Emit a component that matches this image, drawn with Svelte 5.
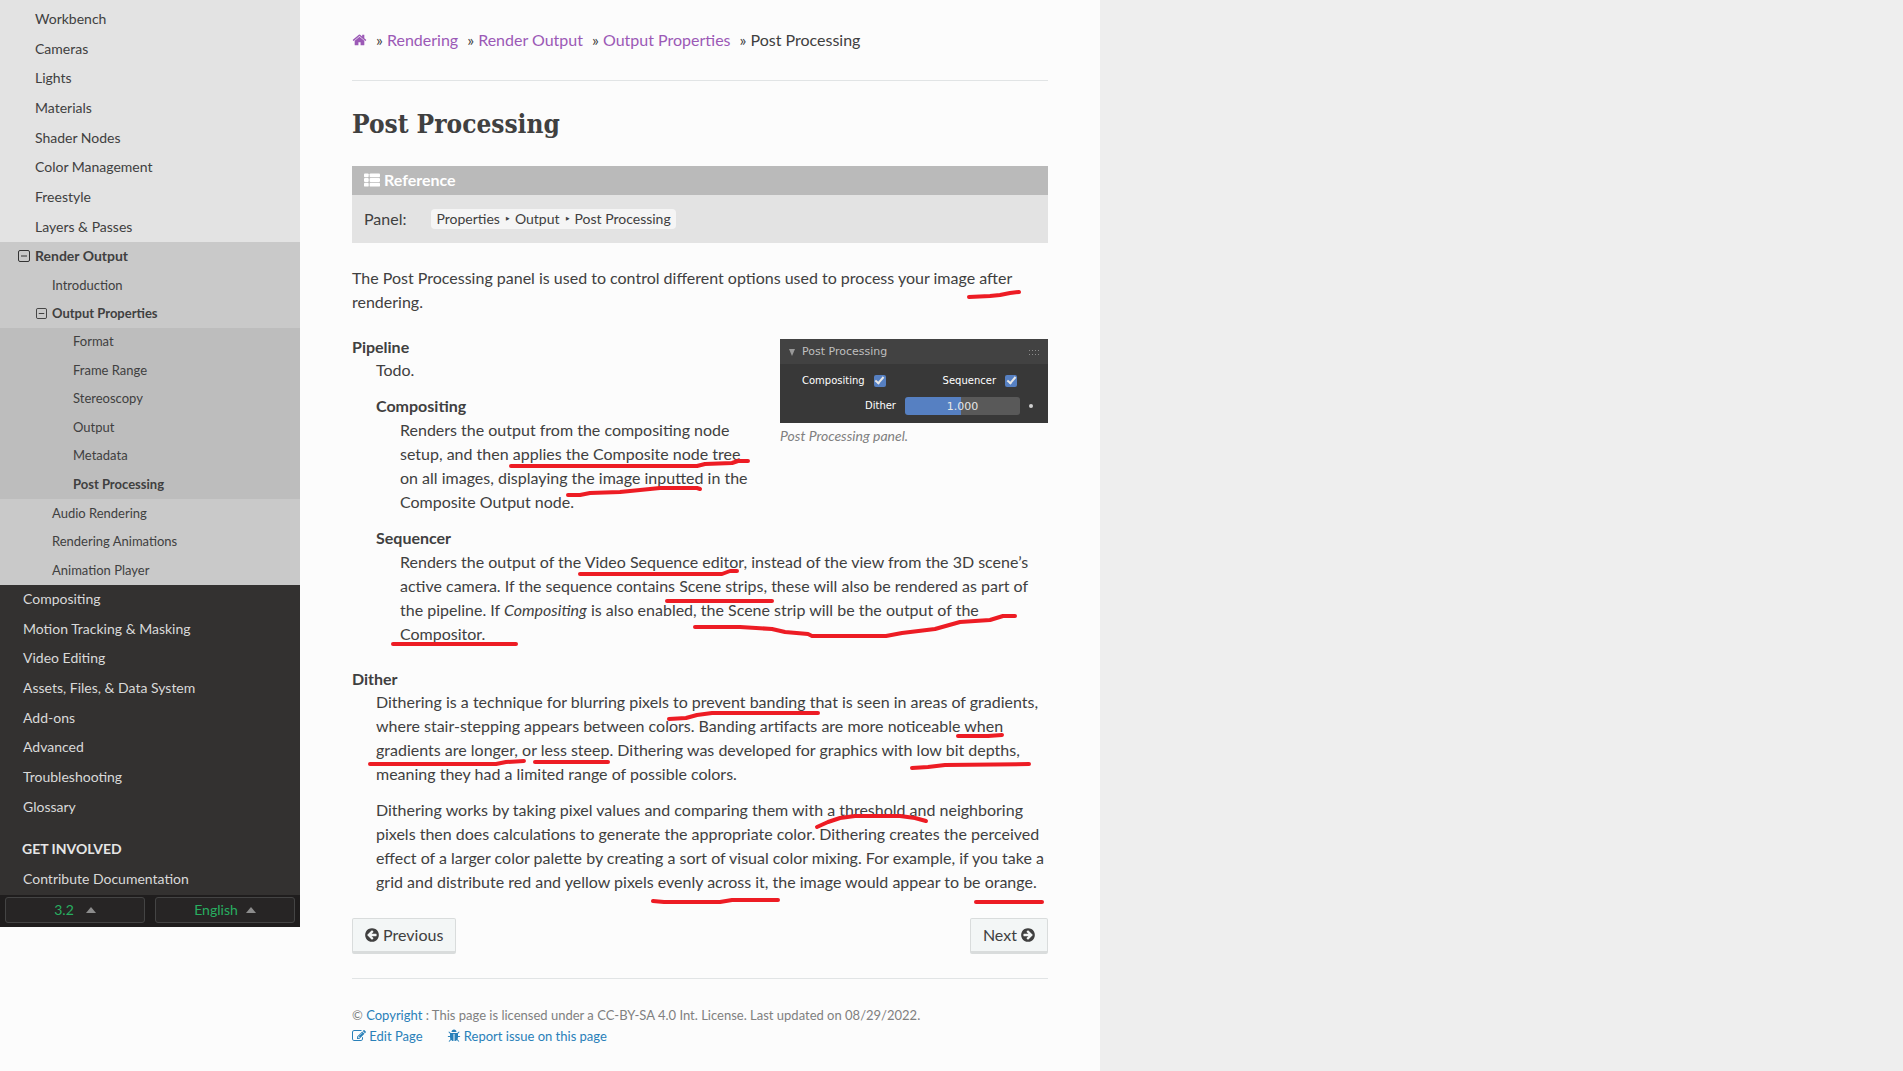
<script>
  const chapters = ['Workbench', 'Cameras', 'Lights', 'Materials', 'Shader Nodes', 'Color Management', 'Freestyle', 'Layers & Passes'];
  const outputPages = ['Format', 'Frame Range', 'Stereoscopy', 'Output', 'Metadata', 'Post Processing'];
  const outputSiblings = ['Audio Rendering', 'Rendering Animations', 'Animation Player'];
  const sections = ['Compositing', 'Motion Tracking & Masking', 'Video Editing', 'Assets, Files, & Data System', 'Add-ons', 'Advanced', 'Troubleshooting', 'Glossary'];
  const crumbs = ['Rendering', 'Render Output', 'Output Properties'];

  // Pen marks drawn over the article
  const marks = [
    '969,297 990,296 1000,295 1010,293 1019,292',
    '511,466 697,466 705,464 732,463 738,461 748,461',
    '568,495 580,495 590,493 620,492 640,490 660,488 697,488 700,489',
    '580,574 722,574 730,571 737,571',
    '667,601 772,601',
    '695,627 740,627 772,629 785,632 808,634 812,636 886,636 902,633 935,629 960,622 990,620 1003,616 1015,616',
    '393,644 516,644',
    '669,719 686,718 697,715 712,713 818,713',
    '958,736 988,736 1002,735',
    '370,764 496,764 506,762 524,761',
    '535,762 608,762',
    '912,768 928,767 945,765 1029,764',
    '817,827 828,822 840,818 855,816 900,816 915,818 926,821',
    '653,901 664,902 720,902 732,900 778,900',
    '976,902 1042,902'
  ];

  const icons = {
    home: 'M1472 992v480q0 26-19 45t-45 19h-384v-384h-256v384h-384q-26 0-45-19t-19-45v-480q0-1 .5-3t.5-3l575-474 575 474q1 2 1 6zm223-69l-62 74q-8 9-21 11h-3q-13 0-21-7l-692-577-692 577q-12 8-24 7-13-2-21-11l-62-74q-8-10-7-23.5t11-21.5l719-599q32-26 76-26t76 26l244 204v-195q0-14 9-23t23-9h192q14 0 23 9t9 23v408l219 182q10 8 11 21.5t-7 23.5z',
    arrow: 'M1408 960v-128q0-26-19-45t-45-19h-502l189-189q19-19 19-45t-19-45l-91-91q-18-18-45-18t-45 18l-362 362-91 91q-18 18-18 45t18 45l91 91 362 362q18 18 45 18t45-18l91-91q18-18 18-45t-18-45l-189-189h502q26 0 45-19t19-45zm256-64q0 209-103 385.5t-279.5 279.5-385.5 103-385.5-103-279.5-279.5-103-385.5 103-385.5 279.5-279.5 385.5-103 385.5 103 279.5 279.5 103 385.5z',
    edit: 'M888 1184l116-116-152-152-116 116v56h96v96h56zm440-720q-16-16-33 1l-350 350q-17 17-1 33t33-1l350-350q17-17 1-33zm80 594v190q0 119-84.5 203.5t-203.5 84.5h-832q-119 0-203.5-84.5t-84.5-203.5v-832q0-119 84.5-203.5t203.5-84.5h832q63 0 117 25 15 7 18 23 3 17-9 29l-49 49q-14 14-32 8-23-6-45-6h-832q-66 0-113 47t-47 113v832q0 66 47 113t113 47h832q66 0 113-47t47-113v-126q0-13 9-22l64-64q15-15 35-7t20 29zm-96-738l288 288-672 672h-288v-288zm444 132l-92 92-288-288 92-92q28-28 68-28t68 28l152 152q28 28 28 68t-28 68z',
    bug: 'M1696 960q0 26-19 45t-45 19h-224q0 171-67 290l208 209q19 19 19 45t-19 45q-18 19-45 19t-45-19l-198-197q-5 5-15 13t-42 28.5-65 36.5-82 29-97 13v-896h-128v896q-51 0-101.5-13.5t-87-33-66-39-43.5-32.5l-15-14-183 207q-20 21-48 21-24 0-43-16-19-18-20.5-44.5t15.5-46.5l202-227q-58-114-58-274h-224q-26 0-45-19t-19-45 19-45 45-19h224v-294l-173-173q-19-19-19-45t19-45 45-19 45 19l173 173h844l173-173q19-19 45-19t45 19 19 45-19 45l-173 173v294h224q26 0 45 19t19 45zm-480-576h-640q0-133 93.5-226.5t226.5-93.5 226.5 93.5 93.5 226.5z'
  };
</script>

{#snippet icon(path, flip)}
  <svg class="icon" class:flip viewBox="0 0 1792 1792" aria-hidden="true"><path d={path} fill="currentColor" /></svg>
{/snippet}

{#snippet collapse(label)}
  <button class="collapse" aria-label={label}>
    <svg viewBox="0 0 12 12" aria-hidden="true">
      <rect x="0.5" y="0.5" width="11" height="11" rx="1.5" fill="none" stroke="currentColor" />
      <path d="M3 6H9" stroke="currentColor" />
    </svg>
  </button>
{/snippet}

<div class="page">
  <nav class="side" aria-label="Manual contents">
    <ul class="rows level2">
      {#each chapters as name}<li><a href="#top">{name}</a></li>{/each}
    </ul>
    <div class="branch">
      <div class="row head">{@render collapse('Collapse Render Output')}<a href="#top">Render Output</a></div>
      <div class="row l3"><a href="#top">Introduction</a></div>
      <div class="row l3 head">{@render collapse('Collapse Output Properties')}<a href="#top">Output Properties</a></div>
      <ul class="rows level4">
        {#each outputPages as name, i}<li class:current={i === 5}><a href="#top">{name}</a></li>{/each}
      </ul>
      <ul class="rows level3">
        {#each outputSiblings as name}<li><a href="#top">{name}</a></li>{/each}
      </ul>
    </div>
    <ul class="rows level1">
      {#each sections as name}<li><a href="#top">{name}</a></li>{/each}
    </ul>
    <p class="caption">Get Involved</p>
    <ul class="rows level1">
      <li><a href="#top">Contribute Documentation</a></li>
    </ul>
    <div class="switches">
      <button>3.2 <svg viewBox="0 0 10 6" aria-hidden="true"><path d="M0 6L5 0L10 6Z" /></svg></button>
      <button>English <svg viewBox="0 0 10 6" aria-hidden="true"><path d="M0 6L5 0L10 6Z" /></svg></button>
    </div>
  </nav>

  <main id="top">
    <nav aria-label="Breadcrumb">
      <ol class="crumbs">
        <li><a href="#top" aria-label="Home">{@render icon(icons.home)}</a></li>
        {#each crumbs as name}<li>» <a href="#top">{name}</a></li>{/each}
        <li>» Post Processing</li>
      </ol>
    </nav>

    <h1>Post Processing</h1>

    <section class="note">
      <h2>
        <svg viewBox="0 0 17 14" aria-hidden="true">
          <g fill="currentColor">
            <rect x="0" y="0" width="5" height="4" rx="1" /><rect x="6" y="0" width="11" height="4" rx="1" />
            <rect x="0" y="5" width="5" height="4" rx="1" /><rect x="6" y="5" width="11" height="4" rx="1" />
            <rect x="0" y="10" width="5" height="4" rx="1" /><rect x="6" y="10" width="11" height="4" rx="1" />
          </g>
        </svg>
        Reference
      </h2>
      <dl class="field">
        <dt>Panel:</dt>
        <dd class="path"><span>Properties</span><span>‣</span><span>Output</span><span>‣</span><span>Post Processing</span></dd>
      </dl>
    </section>

    <p class="intro">The Post Processing panel is used to control different options used to process your image after rendering.</p>

    <figure>
      <div class="panel">
        <div class="panel-title">
          <svg class="tri" viewBox="0 0 6 7" aria-hidden="true"><path d="M0 0H6L3 7Z" /></svg>
          <span>Post Processing</span>
          <svg class="grip" viewBox="0 0 11 5" aria-hidden="true"><path d="M0 .5H11M0 4.5H11" stroke-dasharray="1 2" /></svg>
        </div>
        <div class="panel-body">
          <div class="checks">
            <label>Compositing <input type="checkbox" checked /></label>
            <label>Sequencer <input type="checkbox" checked /></label>
          </div>
          <div class="dither">
            <label for="dither">Dither</label>
            <input id="dither" type="text" value="1.000" />
            <span class="dot"></span>
          </div>
        </div>
      </div>
      <figcaption>Post Processing panel.</figcaption>
    </figure>

    <dl class="terms">
      <dt>Pipeline</dt>
      <dd>
        <p>Todo.</p>
        <dl>
          <dt>Compositing</dt>
          <dd><p>Renders the output from the compositing node setup, and then applies the Composite node tree on all images, displaying the image inputted in the Composite Output node.</p></dd>
          <dt>Sequencer</dt>
          <dd><p>Renders the output of the Video Sequence editor, instead of the view from the 3D scene’s active camera. If the sequence contains Scene strips, these will also be rendered as part of the pipeline. If <em>Compositing</em> is also enabled, the Scene strip will be the output of the Compositor.</p></dd>
        </dl>
      </dd>
      <dt>Dither</dt>
      <dd>
        <p>Dithering is a technique for blurring pixels to prevent banding that is seen in areas of gradients, where stair-stepping appears between colors. Banding artifacts are more noticeable when gradients are longer, or less steep. Dithering was developed for graphics with low bit depths, meaning they had a limited range of possible colors.</p>
        <p>Dithering works by taking pixel values and comparing them with a threshold and neighboring pixels then does calculations to generate the appropriate color. Dithering creates the perceived effect of a larger color palette by creating a sort of visual color mixing. For example, if you take a grid and distribute red and yellow pixels evenly across it, the image would appear to be orange.</p>
      </dd>
    </dl>

    <div class="pager">
      <a href="#top">{@render icon(icons.arrow)} Previous</a>
      <a href="#top">Next {@render icon(icons.arrow, true)}</a>
    </div>

    <footer>
      <p>© <a href="#top">Copyright</a> : This page is licensed under a CC-BY-SA 4.0 Int. License. Last updated on 08/29/2022.</p>
      <p class="tools">
        <a href="#top">{@render icon(icons.edit)} Edit Page</a>
        <a href="#top">{@render icon(icons.bug)} Report issue on this page</a>
      </p>
    </footer>
  </main>

  <svg class="marks" viewBox="0 0 1100 1071" aria-hidden="true">
    {#each marks as points}<polyline {points} />{/each}
  </svg>
</div>

<style>
  :global(body) {
    margin: 0;
    background: #eee;
    color: #404040;
    font: 16px/24px Lato, "Liberation Sans", sans-serif;
  }
  .page {
    position: relative;
    box-sizing: border-box;
    max-width: 1100px;
    min-height: 100vh;
    display: grid;
    grid-template-columns: 300px minmax(0, 1fr);
    align-items: start;
    background: #fcfcfc;
  }
  a { color: #2980b9; text-decoration: none; }
  p, ul, ol, dl, dd, figure, h1, h2 { margin: 0; padding: 0; }
  ul, ol { list-style: none; }
  .icon { width: 16px; height: 16px; vertical-align: -2px; }
  .flip { transform: scaleX(-1); }

  .side { background: #333130; font-size: 14px; line-height: 18px; }
  .side a { color: inherit; }
  .rows { display: grid; }
  .rows li, .row { display: flex; align-items: center; box-sizing: border-box; padding-bottom: 2px; }
  .level2 { grid-auto-rows: 30px 29px 30px; padding: 5px 0 0 35px; background: #e3e3e3; }
  .branch { background: #c9c9c9; }
  .row { height: 30px; padding-left: 18px; gap: 5px; }
  .head, .current { font-weight: 700; }
  .l3 { height: 28px; padding-left: 52px; font-size: 13px; }
  .l3.head { padding-left: 36px; gap: 5px; }
  .collapse { display: flex; padding: 0; border: 0; background: none; color: #333; }
  .collapse svg { width: 12px; height: 12px; }
  .l3 .collapse svg { width: 11px; height: 11px; }
  .level4 { grid-auto-rows: 28px 29px; padding-left: 73px; background: #bdbdbd; font-size: 13px; }
  .level3 { grid-auto-rows: 29px 28px; padding-left: 52px; font-size: 13px; }
  .level1 { grid-auto-rows: 30px 29px 30px; padding-left: 23px; color: #d9d9d9; }
  .caption { padding: 18px 22px 7px; color: #e6e6e6; font-weight: 700; text-transform: uppercase; }
  .switches { display: grid; grid-template-columns: 1fr 1fr; gap: 10px; padding: 2px 5px 4px; background: #1f1d1d; }
  .switches button {
    display: flex; align-items: center; justify-content: center; gap: 12px;
    height: 26px; padding: 0; border: 1px solid #444; border-radius: 3px;
    background: #272525; color: #27ae60; font: 14px/18px Lato, sans-serif;
  }
  .switches button:last-child { gap: 8px; }
  .switches svg { width: 10px; height: 6px; fill: #8c8c8c; }

  main { padding: 28px 52px 20px; }
  .crumbs { display: flex; gap: 9px; padding-bottom: 28px; border-bottom: 1px solid #e1e4e5; }
  .crumbs a { color: #9b59b6; }
  .crumbs .icon { width: 15px; height: 16px; }
  h1 { padding: 25px 0 23px; font: 700 26px/37px "DejaVu Serif Condensed", "DejaVu Serif", serif; }

  .note { background: #e3e3e3; }
  .note h2 {
    display: flex; align-items: center; gap: 4px; box-sizing: border-box; height: 29px; padding: 0 12px 2px;
    background: #bababa; color: #fff; font-size: 16px; line-height: 24px;
  }
  .note h2 svg { width: 16px; height: 14px; }
  .field { display: flex; align-items: center; gap: 25px; padding: 12px; }
  .path { display: flex; gap: 5px; padding: 1px 5px; border-radius: 4px; background: #f5f5f5; font-size: 14px; line-height: 18px; }
  .intro { margin: 23px 0 22px; }

  figure { float: right; width: 268px; margin: 3px 0 24px 24px; }
  .panel { background: #383838; color: #fff; font: 10px/16px "DejaVu Sans", sans-serif; }
  .panel-title {
    display: flex; align-items: center; gap: 7px; height: 24px; padding: 1px 8px 0 9px;
    background: #424242; color: #bfbfbf; font-size: 11px;
  }
  .tri { width: 6px; height: 7px; fill: #999; }
  .grip { width: 11px; height: 5px; margin-left: auto; stroke: #8c8c8c; }
  .panel-body { padding: 8px 12px 8px 22px; }
  .checks { display: flex; justify-content: space-between; padding-right: 19px; }
  .checks label { display: flex; align-items: center; gap: 9px; height: 18px; }
  .checks input {
    display: grid; place-items: center; appearance: none; width: 12px; height: 12px;
    margin: 0; border-radius: 2px; background: #5680c2;
  }
  .checks input::before {
    content: ""; box-sizing: border-box; width: 5px; height: 9px; margin-bottom: 3px;
    border: solid #e6e6e6; border-width: 0 2px 2px 0; rotate: 40deg;
  }
  .dither { display: flex; align-items: center; justify-content: flex-end; gap: 9px; margin-top: 7px; }
  .dither input {
    box-sizing: border-box; width: 115px; height: 18px; padding: 0; border: 0; border-radius: 3px;
    background: linear-gradient(90deg, #5680c2 49%, #595959 49%); color: #e6e6e6;
    font: 11px/16px "DejaVu Sans", sans-serif; text-align: center;
  }
  .dot { width: 4px; height: 4px; margin-right: 3px; border-radius: 50%; background: #d0d0d0; }
  figcaption { padding-top: 1px; color: #808080; font-size: 14px; font-style: italic; }

  dt { font-weight: 700; }
  .field dt { font-weight: 400; }
  .terms dd { margin-left: 24px; }
  .terms > dt { line-height: 22px; }
  .terms > dd + dt { margin-top: 22px; }
  .terms p + p, .terms dl, .terms dl dd + dt { margin-top: 12px; }

  .pager { display: flex; justify-content: space-between; margin: 24px 0; }
  .pager a {
    padding: 5px 12px; border: 1px solid #d9dcdc; border-bottom-width: 3px;
    border-radius: 2px; background: #f3f6f6; color: #404040; line-height: 22px;
  }
  .pager .icon { margin: 0 -1px; }
  footer { padding-top: 26px; border-top: 1px solid #e1e4e5; color: #808080; font-size: 13px; line-height: 21px; }
  .tools { display: flex; gap: 24px; }
  .tools .icon { width: 14px; height: 14px; }

  .marks { position: absolute; top: 0; left: 0; width: 1100px; height: 1071px; pointer-events: none; }
  .marks polyline { fill: none; stroke: #ed1c24; stroke-width: 4px; stroke-linecap: round; stroke-linejoin: round; }
</style>
